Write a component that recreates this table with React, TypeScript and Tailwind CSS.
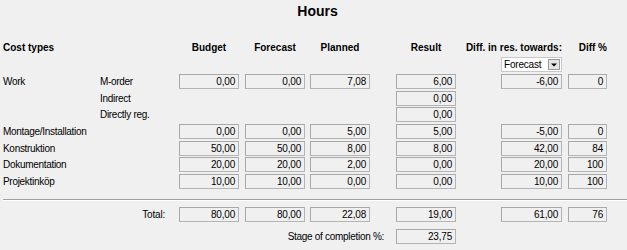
import React from "react";

const font = { fontFamily: '"Liberation Sans", Arial, sans-serif' };

function Box({ v, w = "w-[60px]", ml = "" }: { v?: string; w?: string; ml?: string }) {
  return (
    <div
      className={`${w} ${ml} h-[15px] shrink-0 border border-[#b4b4b4] border-t-[#a8a8a8] border-l-[#a8a8a8] bg-[#f0f0f0] text-right pr-[3px] leading-[13px] tracking-[-0.2px]`}
    >
      {v}
    </div>
  );
}

function Spacer({ w }: { w: string }) {
  return <div className={`${w} shrink-0`} />;
}

type RowData = {
  label?: string;
  sub?: string;
  vals?: (string | null)[]; // budget, forecast, planned, result, diff, diffpct
  mt: string;
};

function DataRow({ label, sub, vals, mt }: RowData) {
  const v = vals ?? [null, null, null, null, null, null];
  return (
    <div className={`flex items-center h-[15px] ${mt}`}>
      <div className="w-[97px] shrink-0 whitespace-nowrap tracking-[-0.3px]">{label}</div>
      <div className="w-[79px] shrink-0 whitespace-nowrap tracking-[-0.3px]">{sub}</div>
      {v[0] !== null ? <Box v={v[0]} /> : <Spacer w="w-[60px]" />}
      {v[1] !== null ? <Box v={v[1]} ml="ml-[6px]" /> : <Spacer w="w-[66px]" />}
      {v[2] !== null ? <Box v={v[2]} ml="ml-[5px]" /> : <Spacer w="w-[65px]" />}
      {v[3] !== null ? <Box v={v[3]} ml="ml-[26px]" /> : <Spacer w="w-[86px]" />}
      {v[4] !== null ? <Box v={v[4]} w="w-[61px]" ml="ml-[45px]" /> : <Spacer w="w-[106px]" />}
      {v[5] !== null ? <Box v={v[5]} w="w-[39px]" ml="ml-[6px]" /> : <Spacer w="w-[45px]" />}
    </div>
  );
}

export default function App() {
  return (
    <div
      className="w-[627px] h-[250px] overflow-hidden bg-[#f0f0f0] text-black text-[10px] relative"
      style={font}
    >
      {/* Title */}
      <div className="h-[22px] pt-[3px] pl-[8px] text-center text-[14px] font-bold leading-[16px]">
        Hours
      </div>

      <div className="pl-[3px]">
        {/* Header row */}
        <div className="flex items-center h-[15px] mt-[18px] font-bold whitespace-nowrap">
          <div className="w-[176px] shrink-0">Cost types</div>
          <div className="w-[60px] shrink-0 text-center">Budget</div>
          <div className="w-[60px] ml-[6px] shrink-0 text-center">Forecast</div>
          <div className="w-[60px] ml-[5px] shrink-0 text-center">Planned</div>
          <div className="w-[60px] ml-[26px] shrink-0 text-center">Result</div>
          <div className="w-[61px] ml-[45px] shrink-0 flex justify-end">
            <span>Diff. in res. towards:</span>
          </div>
          <div className="w-[39px] ml-[6px] shrink-0 text-right">Diff %</div>
        </div>

        {/* Dropdown row */}
        <div className="flex h-[15px] mt-[2px]">
          <div className="w-[498px] shrink-0" />
          <div className="w-[61px] h-[15px] shrink-0 bg-white border border-[#c8c8c8] flex items-center justify-between pl-[2px] pr-[1px]">
            <span className="leading-[13px] tracking-[-0.2px]">Forecast</span>
            <div className="w-[12px] h-[11px] bg-[#e4e4e4] border border-[#9a9a9a] flex items-center justify-center">
              <svg width="6" height="4" viewBox="0 0 6 4">
                <path d="M0 0.5 L6 0.5 L3 3.5 Z" fill="#000" />
              </svg>
            </div>
          </div>
        </div>

        <DataRow label="Work" sub="M-order" vals={["0,00", "0,00", "7,08", "6,00", "-6,00", "0"]} mt="mt-[2px]" />
        <DataRow sub="Indirect" vals={[null, null, null, "0,00", null, null]} mt="mt-[2px]" />
        <DataRow sub="Directly reg." vals={[null, null, null, "0,00", null, null]} mt="mt-[1px]" />
        <DataRow label="Montage/Installation" vals={["0,00", "0,00", "5,00", "5,00", "-5,00", "0"]} mt="mt-[2px]" />
        <DataRow label="Konstruktion" vals={["50,00", "50,00", "8,00", "8,00", "42,00", "84"]} mt="mt-[2px]" />
        <DataRow label="Dokumentation" vals={["20,00", "20,00", "2,00", "0,00", "20,00", "100"]} mt="mt-[1px]" />
        <DataRow label="Projektinköp" vals={["10,00", "10,00", "0,00", "0,00", "10,00", "100"]} mt="mt-[2px]" />

        {/* Separator */}
        <div className="mt-[10px] border-t border-[#a0a0a0] border-b border-b-white" />

        {/* Total row */}
        <div className="flex items-center h-[15px] mt-[6px]">
          <div className="w-[176px] shrink-0 text-right pr-[14px] tracking-[-0.2px]">Total:</div>
          <Box v="80,00" />
          <Box v="80,00" ml="ml-[6px]" />
          <Box v="22,08" ml="ml-[5px]" />
          <Box v="19,00" ml="ml-[26px]" />
          <Box v="61,00" w="w-[61px]" ml="ml-[45px]" />
          <Box v="76" w="w-[39px]" ml="ml-[6px]" />
        </div>

        {/* Stage of completion */}
        <div className="flex items-center h-[15px] mt-[7px]">
          <div className="w-[381px] shrink-0 text-right tracking-[-0.3px] whitespace-nowrap">
            Stage of completion %:
          </div>
          <Box v="23,75" ml="ml-[12px]" />
        </div>
      </div>
    </div>
  );
}
